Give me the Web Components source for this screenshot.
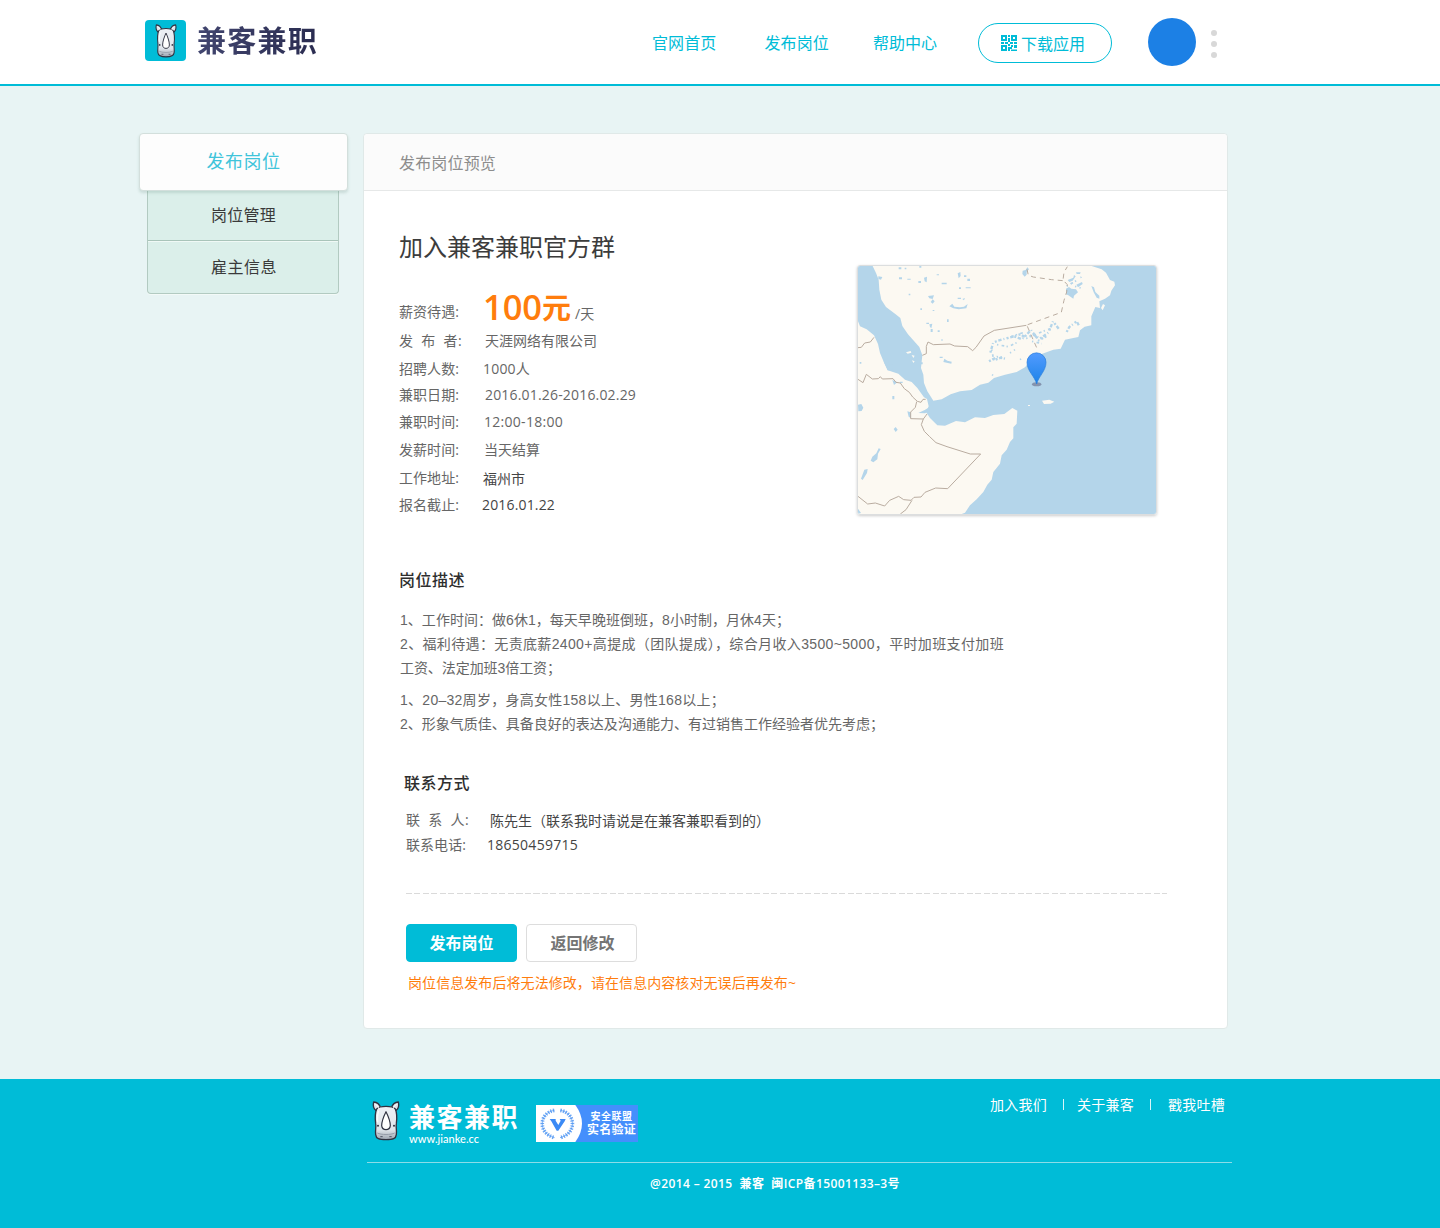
<!DOCTYPE html>
<html lang="zh-CN">
<head>
<meta charset="utf-8">
<title>发布岗位预览 - 兼客兼职</title>
<style>
html,body{margin:0;padding:0}
body{background:#e8f4f4;font-family:"Open Sans","Noto Sans CJK SC",sans-serif;font-size:14px;line-height:20px;color:#666;width:1440px;height:1228px;overflow:hidden}
</style>
</head>
<body>
<jk-page></jk-page>
<script>
/* One line of text; "w" spreads the characters over a width in pixels. */
class JkText extends HTMLElement{
  connectedCallback(){
    if(!this.shadowRoot){
      this.attachShadow({mode:'open'}).innerHTML='<style>:host{display:inline-block;white-space:pre;flex:none}span{display:inline-block}</style><span><slot></slot></span>';
    }
    const w=parseFloat(this.getAttribute('w'));
    if(w){
      const s=this.shadowRoot.querySelector('span');
      const n=[...this.textContent].length;
      s.style.letterSpacing=((w-s.getBoundingClientRect().width)/n)+'px';
    }
  }
}

const define=(name,html)=>{
  const t=document.createElement('template');
  t.innerHTML=html;
  customElements.define(name,class extends HTMLElement{
    constructor(){super();this.attachShadow({mode:'open'}).appendChild(t.content.cloneNode(true));}
  });
};

define('jk-rhino',`
<style>:host{display:block;flex:none;width:28px;height:40px}svg{display:block;width:100%;height:100%}</style>
<svg viewBox="0 0 84 120" preserveAspectRatio="none">
  <defs><linearGradient id="g" x1="0" y1="0" x2="0" y2="1"><stop offset="0" stop-color="#edf0f5"/><stop offset=".7" stop-color="#e0e5eb"/><stop offset="1" stop-color="#9ca4b0"/></linearGradient></defs>
  <g stroke="#2f3140" stroke-width="4" stroke-linejoin="round">
    <path fill="#dfe4ea" d="M5 3C14 4 23 11 26 20L17 31C7 27 2 16 5 3Z"/>
    <path fill="#dfe4ea" d="M79 3C70 4 61 11 58 20L67 31C77 27 82 16 79 3Z"/>
    <path fill="url(#g)" d="M14 24C20 17 31 16 42 16S64 17 70 24C75 36 75 53 73 68C71 79 75 89 73 101C72 113 63 116 42 116S12 113 11 101C9 89 13 79 11 68C9 53 9 36 14 24Z"/>
    <path fill="#fff" stroke-width="3.5" d="M42 32C48 44 55 62 55 74C54 83 49 86 42 86S30 83 29 74C29 62 36 44 42 32Z"/>
  </g>
  <path d="M10 10C15 12 19 17 20 23M74 10C69 12 65 17 64 23" stroke="#fff" stroke-width="3" fill="none"/>
  <path d="M20 30C16 40 16 52 17 64" stroke="#fff" stroke-width="4" fill="none" opacity=".8"/>
  <circle cx="18" cy="74" r="3" fill="#2f3140"/><circle cx="66" cy="74" r="3" fill="#2f3140"/>
  <path d="M16 96C27 102 57 102 68 96" stroke="#8b93a1" stroke-width="2.5" fill="none"/>
  <path d="M25 107h7M52 107h7" stroke="#4d5262" stroke-width="3"/>
</svg>`);

define('jk-qr',`
<style>:host{display:block;width:16px;height:16px;flex:none}svg{display:block}</style>
<svg width="16" height="16" fill="#00bcd7"><path fill-rule="evenodd" d="M0 0h6v6H0zM2 2v2h2V2zM10 0h6v6h-6zM12 2v2h2V2zM0 10h6v6H0zM2 12v2h2v-2z"/>
<path d="M7 0h2v2H7zM7 3h2v4H7zM0 7h3v2H0zM4 7h3v2H4zM9 7h3v2H9zM13 7h3v2h-3zM7 9h2v2H7zM10 10h2v2h-2zM13 10h3v3h-3zM7 12h2v4H7zM9 12h2v2H9zM10 14.500h6V16h-6z"/></svg>`);

define('jk-header',`
<style>
:host{display:flex;box-sizing:border-box;height:86px;border-bottom:2px solid #00bcd7;background:#fff;padding-left:145px;color:#00bcd7;font-size:16px}
.mark{display:flex;width:41px;height:41px;margin-top:20px;border-radius:4px;background:#00bcd7;justify-content:center;align-items:center}
.mark jk-rhino{width:22px;height:34px}
.word{margin:19px 0 0 11px;font:700 29px/40px "Noto Sans CJK SC",sans-serif;background:linear-gradient(90deg,#41456f,#2a2c50);-webkit-background-clip:text;color:transparent;height:42px}
nav{display:flex;margin:33px 0 0 334px;gap:48px}
nav jk-text:last-child{margin-left:-4px}
.pill{display:flex;box-sizing:border-box;width:134px;height:40px;border:1px solid #00bcd7;border-radius:20px;margin:23px 0 0 41px;padding:11px 0 0 22px;gap:4px}
.pill jk-text{margin-top:-1px}
.av{width:48px;height:48px;border-radius:50%;background:#1c80e5;margin:18px 0 0 36px}
.dots{display:flex;flex-direction:column;gap:5px;margin:30px 0 0 15px}
.dots i{width:6px;height:6px;border-radius:50%;background:#d8d8d8}
</style>
<div class="mark"><jk-rhino></jk-rhino></div>
<jk-text class="word" w="121">兼客兼职</jk-text>
<nav><jk-text w="64.500">官网首页</jk-text><jk-text w="64.500">发布岗位</jk-text><jk-text w="64">帮助中心</jk-text></nav>
<div class="pill"><jk-qr></jk-qr><jk-text w="64">下载应用</jk-text></div>
<div class="av"></div>
<div class="dots"><i></i><i></i><i></i></div>`);

define('jk-side',`
<style>
:host{display:flex;flex-direction:column;align-items:flex-start;width:209px;flex:none;color:#3a3a3a;font-size:16px}
.on{position:relative;box-sizing:border-box;width:209px;height:58px;border:1px solid #d3dfdc;border-radius:4px;background:#fdfdfd;box-shadow:0 2px 3px rgba(90,130,120,.22);color:#40c4da;font-size:18px;text-align:center;line-height:55px}
.sub{box-sizing:border-box;width:192px;height:103px;margin-left:8px;border:1px solid #b2cac1;border-top:0;border-radius:0 0 4px 4px;background:#dbefea;display:flex;flex-direction:column;text-align:center;box-shadow:0 1px 0 #f3faf8}
.a{height:49px;line-height:49px;border-bottom:1px solid #a9c4ba;padding-left:1px}
.b{flex:1;border-top:1px solid #f0f9f6;line-height:51px;padding-left:2px}
</style>
<div class="on"><jk-text w="74">发布岗位</jk-text></div>
<div class="sub"><div class="a"><jk-text w="65">岗位管理</jk-text></div><div class="b"><jk-text w="66">雇主信息</jk-text></div></div>`);

/* label / value line */
define('jk-row',`
<style>
:host{display:flex;height:20px;margin-top:var(--gap,8px)}
.l{width:var(--lw,84px);flex:none;white-space:pre}
.v{padding-top:var(--dy,0px);color:var(--vc,#666);height:20px}
</style>
<div class="l"><slot name="label"></slot></div><div class="v"><slot></slot></div>`);

define('jk-map',`
<style>
:host{display:block;box-sizing:border-box;width:300px;height:250px;border:1px solid #dcdedf;border-radius:3px;overflow:hidden;box-shadow:0 1px 3px rgba(0,0,0,.2);flex:none}
svg{display:block}
</style>
<svg width="298" height="248" viewBox="24 24 894 744" preserveAspectRatio="none">
<rect x="20" y="20" width="900" height="750" fill="#b4d5ea"/>
<g fill="#fcf9f2">
<path d="M66 20L78 45 86 65 88 95 94 125 108 147 135 167 151 180 157 204 174 229 190 247 208 267 217 292 213 330 220 350 222 375 232 400 243 417 250 428 275 424 302 409 330 400 365 396 390 380 415 374 432 360 465 350 500 342 525 328 545 305 575 288 610 275 632 272 645 245 670 240 685 237 690 217 704 206 724 202 724 175 736 147 750 150 748 130 765 122 780 112 784 98 795 82 793 71 780 66 768 44 755 34 725 24 700 20Z"/>
<path d="M20 180L30 205 50 214 72 232 84 258 90 285 101 311 113 337 145 347 165 365 185 372 202 390 222 418 231 423 236 445 228 462 240 480 262 502 285 503 318 489 345 493 375 478 405 480 430 471 463 468 487 450 502 458 500 497 490 508 490 541 480 552 470 575 455 592 450 617 430 642 425 665 412 680 400 702 380 724 360 742 345 764 330 770 20 770Z"/>
<path d="M576 428L598 425 613 431 602 437 582 438ZM534 441h6v3h-6zM753 150L759 138 765 142 758 157ZM168 283L182 279 184 284 173 287ZM185 291L194 293 190 300ZM186 307L194 310 190 315Z"/>
</g>
<g fill="#b4d5ea">
<path d="M518 38L527 36 532 28 537 34 530 41 530 50 524 56 517 48ZM648 92L657 87 664 92 678 94 684 103 672 113 670 122 655 112 648 109ZM724 84L732 88 736 102 748 113 748 122 740 119 731 103ZM653 66L670 59 672 51 677 55 668 68 658 72ZM679 80L696 72 698 78 684 88ZM678 43L692 43 690 48 680 48ZM660 75L669 73 665 79ZM692 54L696 59 691 61Z"/>
<path d="M146 28h8v6h-8zM164 29h5v5h-5zM208 24h6v5h-6zM147 58h9v6h-9zM172 62h10v3h-10zM222 59L231 56 230 73 224 70ZM205 69h8v6h-8zM260 49h7v3h-7zM275 74h15v5h-15zM323 46L331 42 332 54 326 61ZM342 52h7v5h-7zM327 88h6v5h-6zM352 62h8v7h-8zM347 88h15v3h-15zM176 107h5v5h-5zM234 114L252 112 248 123 238 121ZM248 124L254 130 248 137 242 132ZM298 145L307 137 313 146 330 148 342 146 353 138 349 151 326 154 310 151ZM323 119h10v4h-10zM337 123L345 120 342 127ZM211 151h5v5h-5zM248 156h5v3h-5zM291 184h5v8h-5zM229 194h8v4h-8zM238 199L247 197 244 211 240 207ZM242 213h6v9h-6zM263 217h6v5h-6zM85 55L97 57 93 65 85 63ZM274 244h4v4h-4z"/>
<path d="M269 296h9v4h-9zM283 302L292 308 305 311 304 317 280 312ZM211 313h7v6h-7zM127 366L142 373 132 381ZM150 371h8v4h-8zM127 414h6v10h-6zM24 440L34 438 40 449 35 459 25 460ZM131 513L137 507 143 515 137 522ZM86 571L92 573 84 587 82 604 70 613 62 608 67 596 79 586ZM43 635L53 633 51 645 38 666 33 662ZM24 752L33 765 24 767ZM172 460L182 463 183 481 176 476ZM205 465L224 456 238 448 238 460 225 466ZM29 312h5v5h-5zM24 120L28 130 24 145ZM101 311L112 300 118 318 130 322 128 335 113 337Z"/>
</g>
<g stroke="#b4d5ea" fill="none">
<path stroke-width="7" stroke-dasharray="6 5 10 6 3 7" d="M421 284L430 253 458 244 490 236 511 229 530 240 550 230 570 242 596 223 609 190 626 212M417 310L441 297 465 302M437 305L462 295M650 222L658 207 680 190 687 203M493 235L516 244 543 216 566 247 589 235"/>
<path stroke-width="5" stroke-dasharray="4 10 8 7" d="M441 260L475 266 500 254M470 240L525 222M554 230L605 210M480 285L495 275M510 305L520 298M546 250L575 257M650 85L684 65M675 85L692 90M425 275L432 310M426 350L432 354"/>
</g>
<g stroke="#b9aca0" stroke-width="3" fill="none" stroke-linejoin="round">
<path d="M217 292L229 287 229 265 234 252 250 260 300 258 314 264 353 266 368 278 378 268 402 234 433 217 529 202"/>
<path stroke-dasharray="15 12" d="M533 200L634 163 642 127 650 102 652 80 639 66 642 43 652 26M531 34L535 52 550 57 605 65 639 68M532 205L545 235 563 276"/>
<path d="M24 269L34 268 44 255 61 252 72 238M24 364L39 374 49 349 67 363 85 362 91 356 97 363 129 362 138 373 151 375 163 392 178 403 188 417 202 430 213 433 219 424 227 424M200 431L196 448 182 462 182 482 220 483 231 468M220 483L214 500 223 520 238 535 258 554 291 566 361 588 392 588 293 692 257 690 225 703 213 717 192 718 183 727 161 725 146 715 119 727 104 744 76 735 53 738 24 715M186 727L168 755 151 768"/>
</g>
<defs><linearGradient id="p" x1="0" y1="0" x2="0" y2="1"><stop offset="0" stop-color="#529bff"/><stop offset="1" stop-color="#1c83e8"/></linearGradient></defs>
<ellipse cx="560" cy="379" rx="14" ry="6" fill="#8493ae"/>
<path d="M560 378C555 356 531 339 531 313A28 28 0 0 1 588 313C588 339 565 356 560 378Z" fill="url(#p)" stroke="#267bdb" stroke-width="2"/>
</svg>`);

define('jk-button',`
<style>
:host{display:block;box-sizing:border-box;width:111px;height:38px;border-radius:4px;border:1px solid #ddd;background:#fff;color:#747474;font-weight:700;font-size:16px;line-height:36px;text-align:center;padding-left:2px}
:host([primary]){background:#00bcd7;border-color:#00bcd7;color:#fff;padding-left:0}
</style><slot></slot>`);

define('jk-card',`
<style>
:host{display:block;box-sizing:border-box;width:865px;height:896px;border:1px solid #e0e9e8;border-radius:4px;background:#fff;flex:none}
.head{height:56px;border-bottom:1px solid #e6e8e8;background:#fbfbfb;border-radius:4px 4px 0 0;padding-left:35px;font-size:16px;line-height:58px;color:#8d8d8d}
.top{display:flex;padding-left:35px;height:371px}
.info{width:458px}
h1{margin:40px 0 0;font-size:24px;line-height:32px;font-weight:400;color:#3c3c3c}
.pay{display:flex;height:41px;margin-top:19px}
.pay .l{width:84px;padding-top:20px}
.n{font-size:34.500px;font-weight:600;line-height:36px;color:#ff7d0d;margin-top:7px}
.y{font:700 29px/34px "Noto Sans CJK SC";color:#ff7d0d;margin-top:7px}
.d{padding:22px 0 0 4px}
jk-map{margin-top:74px}
h2{margin:0;font-size:16px;line-height:24px;font-weight:500;color:#2e2e2e}
.desc{padding:6px 0 0 35px}
.t{font-family:"Liberation Sans","Noto Sans CJK SC",sans-serif;line-height:24px;padding-left:1px}
.t p{margin:16px 0 0}.t p+p{margin-top:8px}.t jk-text{display:block}
.contact{padding:35px 0 0 42px}
.contact h2{margin-left:-2px}
hr{border:0;margin:38px 0 0;width:761px;height:1px;background:repeating-linear-gradient(90deg,#dadada 0 6px,transparent 6px 8.500px)}
.btns{display:flex;gap:9px;margin-top:30px}
.warn{color:#ff7d0d;margin:11px 0 0 2px}
</style>
<div class="head"><jk-text w="97">发布岗位预览</jk-text></div>
<div class="top">
 <div class="info">
  <h1><jk-text w="216">加入兼客兼职官方群</jk-text></h1>
  <div class="pay"><div class="l"><jk-text w="60">薪资待遇:</jk-text></div><jk-text class="n" w="59">100</jk-text><jk-text class="y">元</jk-text><jk-text class="d">/天</jk-text></div>
  <jk-row style="--gap:8px;--lw:86px"><jk-text slot="label" w="63">发  布  者:</jk-text><jk-text>天涯网络有限公司</jk-text></jk-row>
  <jk-row style="--gap:8px"><jk-text slot="label" w="60">招聘人数:</jk-text><jk-text w="47">1000人</jk-text></jk-row>
  <jk-row style="--gap:6px;--lw:86px"><jk-text slot="label" w="60">兼职日期:</jk-text><jk-text w="151">2016.01.26-2016.02.29</jk-text></jk-row>
  <jk-row style="--gap:7px;--lw:85px"><jk-text slot="label" w="60">兼职时间:</jk-text><jk-text w="79">12:00-18:00</jk-text></jk-row>
  <jk-row style="--gap:8px;--lw:85px"><jk-text slot="label" w="60">发薪时间:</jk-text><jk-text>当天结算</jk-text></jk-row>
  <jk-row style="--gap:8px;--vc:#444;--dy:1px"><jk-text slot="label" w="60">工作地址:</jk-text><jk-text>福州市</jk-text></jk-row>
  <jk-row style="--gap:7px;--lw:83px;--vc:#444"><jk-text slot="label" w="60">报名截止:</jk-text><jk-text w="73">2016.01.22</jk-text></jk-row>
 </div>
 <jk-map></jk-map>
</div>
<div class="desc">
 <h2><jk-text w="66">岗位描述</jk-text></h2>
 <div class="t">
  <p><jk-text w="390">1、工作时间：做6休1，每天早晚班倒班，8小时制，月休4天；</jk-text><jk-text w="604">2、福利待遇：无责底薪2400+高提成（团队提成），综合月收入3500~5000，平时加班支付加班</jk-text><jk-text w="161">工资、法定加班3倍工资；</jk-text></p>
  <p><jk-text w="325">1、20–32周岁，身高女性158以上、男性168以上；</jk-text><jk-text w="484">2、形象气质佳、具备良好的表达及沟通能力、有过销售工作经验者优先考虑；</jk-text></p>
 </div>
</div>
<div class="contact">
 <h2><jk-text w="66">联系方式</jk-text></h2>
 <jk-row style="--gap:15px;--vc:#444;--dy:1px"><jk-text slot="label" w="63">联  系  人:</jk-text><jk-text>陈先生（联系我时请说是在兼客兼职看到的）</jk-text></jk-row>
 <jk-row style="--gap:5px;--lw:81px;--vc:#444"><jk-text slot="label" w="60">联系电话:</jk-text><jk-text w="91">18650459715</jk-text></jk-row>
 <hr>
 <div class="btns"><jk-button primary><jk-text>发布岗位</jk-text></jk-button><jk-button><jk-text>返回修改</jk-text></jk-button></div>
 <div class="warn"><jk-text w="388">岗位信息发布后将无法修改，请在信息内容核对无误后再发布~</jk-text></div>
</div>`);

define('jk-badge',`
<style>
:host{display:flex;width:102px;height:37px;background:linear-gradient(90deg,#fff 30px,#448ffc 30px);color:#fff;font-family:"Liberation Sans","Noto Sans CJK SC",sans-serif;font-weight:700}
svg{display:block;flex:none;width:46px;height:37px}
.x{display:flex;flex-direction:column;align-items:center;padding:5px 0 0 5px}
.s{font-size:10px;line-height:14px}.m{font-size:12px;line-height:13px}
</style>
<svg viewBox="0 0 138 111"><path fill="#448ffc" d="M100 0H138V111H100Z"/><path fill="#fff" d="M0 0H118Q158 55 118 111H0Z"/>
<g fill="none" stroke="#6ba7f5" stroke-width="11" stroke-dasharray="4 4"><path d="M55 16C8 24 5 86 56 98M73 16C120 24 123 86 72 98"/></g>
<g fill="none" stroke="#4c92f0" stroke-width="2"><path d="M55 16C8 24 5 86 56 98M73 16C120 24 123 86 72 98"/></g>
<path fill="#3b8af5" d="M41 42H59V47L67 60 74 47 71 42H89L86 49 67 77H62L46 49Z"/></svg>
<div class="x"><jk-text class="s" w="42">安全联盟</jk-text><jk-text class="m" w="49">实名验证</jk-text></div>`);

define('jk-footer',`
<style>
:host{display:block;box-sizing:border-box;height:149px;background:#00bcd7;color:#fff;padding:0 208px 0 367px}
.r{display:flex;height:83px;border-bottom:1px solid #8cdce8}
jk-rhino{margin:22px 0 0 5px}
.w{margin:25px 0 0 9px;width:110px;display:flex;flex-direction:column}
.w .c{font:700 26px/29px "Liberation Sans","Noto Sans CJK SC",sans-serif}
.w .u{font:500 11px/12px Lato,sans-serif}
jk-badge{margin:26px 0 0 17px}
.links{display:flex;margin:16px 7px 0 auto}
.links i{width:1px;height:11px;background:#fff;opacity:.85;margin-top:4px}
.cp{font-size:12px;line-height:20px;font-weight:600;margin:11px 0 0 283px}
</style>
<div class="r"><jk-rhino></jk-rhino>
<div class="w"><jk-text class="c" w="110">兼客兼职</jk-text><jk-text class="u" w="70">www.jianke.cc</jk-text></div>
<jk-badge></jk-badge>
<div class="links"><jk-text w="57">加入我们</jk-text><i style="margin-left:16px;margin-right:13px"></i><jk-text w="57">关于兼客</jk-text><i style="margin-left:16px;margin-right:17px"></i><jk-text w="57">戳我吐槽</jk-text></div></div>
<div class="cp"><jk-text w="250">@2014 – 2015  兼客  闽ICP备15001133–3号</jk-text></div>`);

define('jk-page',`
<style>
:host{display:flex;flex-direction:column;height:1228px}
main{display:flex;gap:15px;padding:47px 0 0 139px;height:946px}
</style>
<jk-header></jk-header>
<main><jk-side></jk-side><jk-card></jk-card></main>
<jk-footer></jk-footer>`);
customElements.define('jk-text',JkText);
</script>
</body>
</html>
